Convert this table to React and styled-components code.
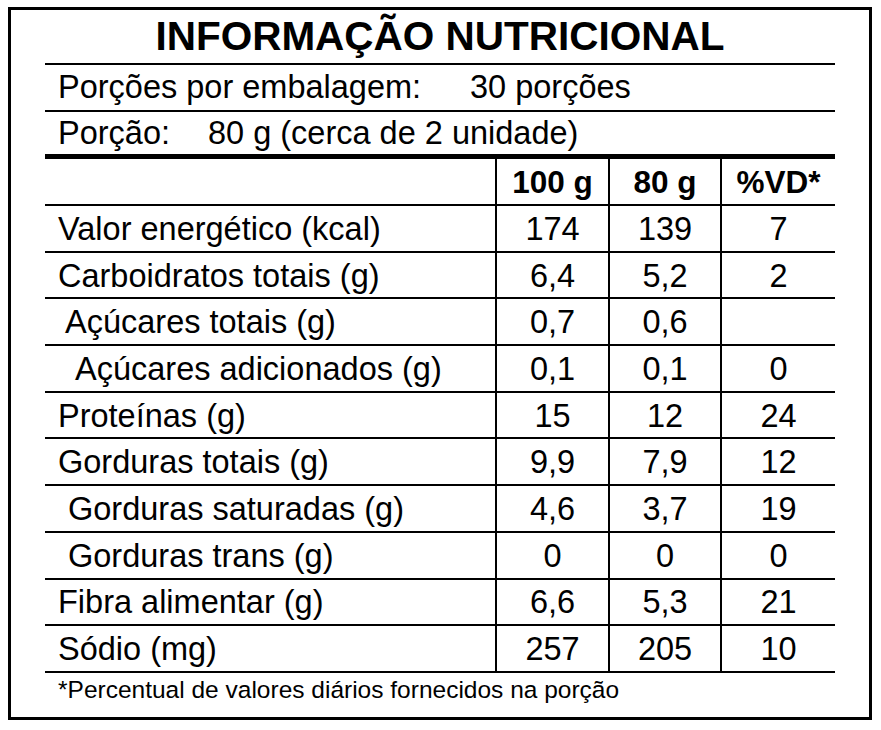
import React from 'react';
import styled, {createGlobalStyle} from 'styled-components';

const GlobalStyle = createGlobalStyle`
    html, body {
        margin: 0;
        padding: 0;
        background: #fff;
    }
    body {
        font-family: "Liberation Sans", Arial, sans-serif;
        color: #000;
    }
`

const rows = [
    {label: 'Valor energético (kcal)', a: '174', b: '139', vd: '7'},
    {label: 'Carboidratos totais (g)', a: '6,4', b: '5,2', vd: '2'},
    {label: 'Açúcares totais (g)', a: '0,7', b: '0,6', vd: '', indent: 7},
    {label: 'Açúcares adicionados (g)', a: '0,1', b: '0,1', vd: '0', indent: 17},
    {label: 'Proteínas (g)', a: '15', b: '12', vd: '24'},
    {label: 'Gorduras totais (g)', a: '9,9', b: '7,9', vd: '12'},
    {label: 'Gorduras saturadas (g)', a: '4,6', b: '3,7', vd: '19', indent: 10},
    {label: 'Gorduras trans (g)', a: '0', b: '0', vd: '0', indent: 10},
    {label: 'Fibra alimentar (g)', a: '6,6', b: '5,3', vd: '21'},
    {label: 'Sódio (mg)', a: '257', b: '205', vd: '10'},
];

const App = () => {
    return (
        <>
            <GlobalStyle/>
            <Frame>
                <Title>INFORMAÇÃO NUTRICIONAL</Title>
                <InfoLine>
                    <InfoLabel $width={412}>Porções por embalagem:</InfoLabel>
                    <span>30 porções</span>
                </InfoLine>
                <InfoLine $height={42} $thick>
                    <InfoLabel $width={150}>Porção:</InfoLabel>
                    <span>80 g (cerca de 2 unidade)</span>
                </InfoLine>
                <Row $header>
                    <Cell/>
                    <Value $bold>100 g</Value>
                    <Value $bold>80 g</Value>
                    <Value $bold>%VD*</Value>
                </Row>
                {
                    rows.map((row) => (
                        <Row key={row.label}>
                            <Cell $indent={row.indent}>{row.label}</Cell>
                            <Value>{row.a}</Value>
                            <Value>{row.b}</Value>
                            <Value>{row.vd}</Value>
                        </Row>
                    ))
                }
                <Footnote>*Percentual de valores diários fornecidos na porção</Footnote>
            </Frame>
        </>
    );
}

const Frame = styled.div`
    box-sizing: border-box;
    width: 864px;
    margin: 7px 0 0 8px;
    border: 3px solid #000;
    padding: 0 34px;
`

const Title = styled.div`
    height: 53px;
    display: flex;
    align-items: center;
    justify-content: center;
    font-size: 40.5px;
    font-weight: bold;
    border-bottom: 2px solid #000;
`

const InfoLine = styled.div`
    height: ${p => p.$height || 45}px;
    display: flex;
    align-items: center;
    padding-left: 13px;
    font-size: 32.5px;
    border-bottom: ${p => p.$thick ? 5 : 2}px solid #000;
`

const InfoLabel = styled.span`
    width: ${p => p.$width}px;
    flex-shrink: 0;
`

const Row = styled.div`
    box-sizing: border-box;
    display: grid;
    grid-template-columns: 450px 113px 112px 115px;
    height: ${p => p.$header ? 47 : 46.7}px;
    border-bottom: 2px solid #000;
    font-size: 32.5px;
`

const Cell = styled.div`
    display: flex;
    align-items: center;
    padding: 2px 0 0 ${p => 13 + (p.$indent || 0)}px;
    white-space: nowrap;
`

const Value = styled.div`
    display: flex;
    align-items: center;
    justify-content: center;
    padding-top: 2px;
    border-left: 2px solid #000;
    font-weight: ${p => p.$bold ? 'bold' : 'normal'};
    font-size: ${p => p.$bold ? 31.5 : 32.5}px;
`

const Footnote = styled.div`
    box-sizing: border-box;
    height: 44px;
    display: flex;
    align-items: center;
    padding: 0 0 10px 13px;
    font-size: 24.5px;
`

export default App;
